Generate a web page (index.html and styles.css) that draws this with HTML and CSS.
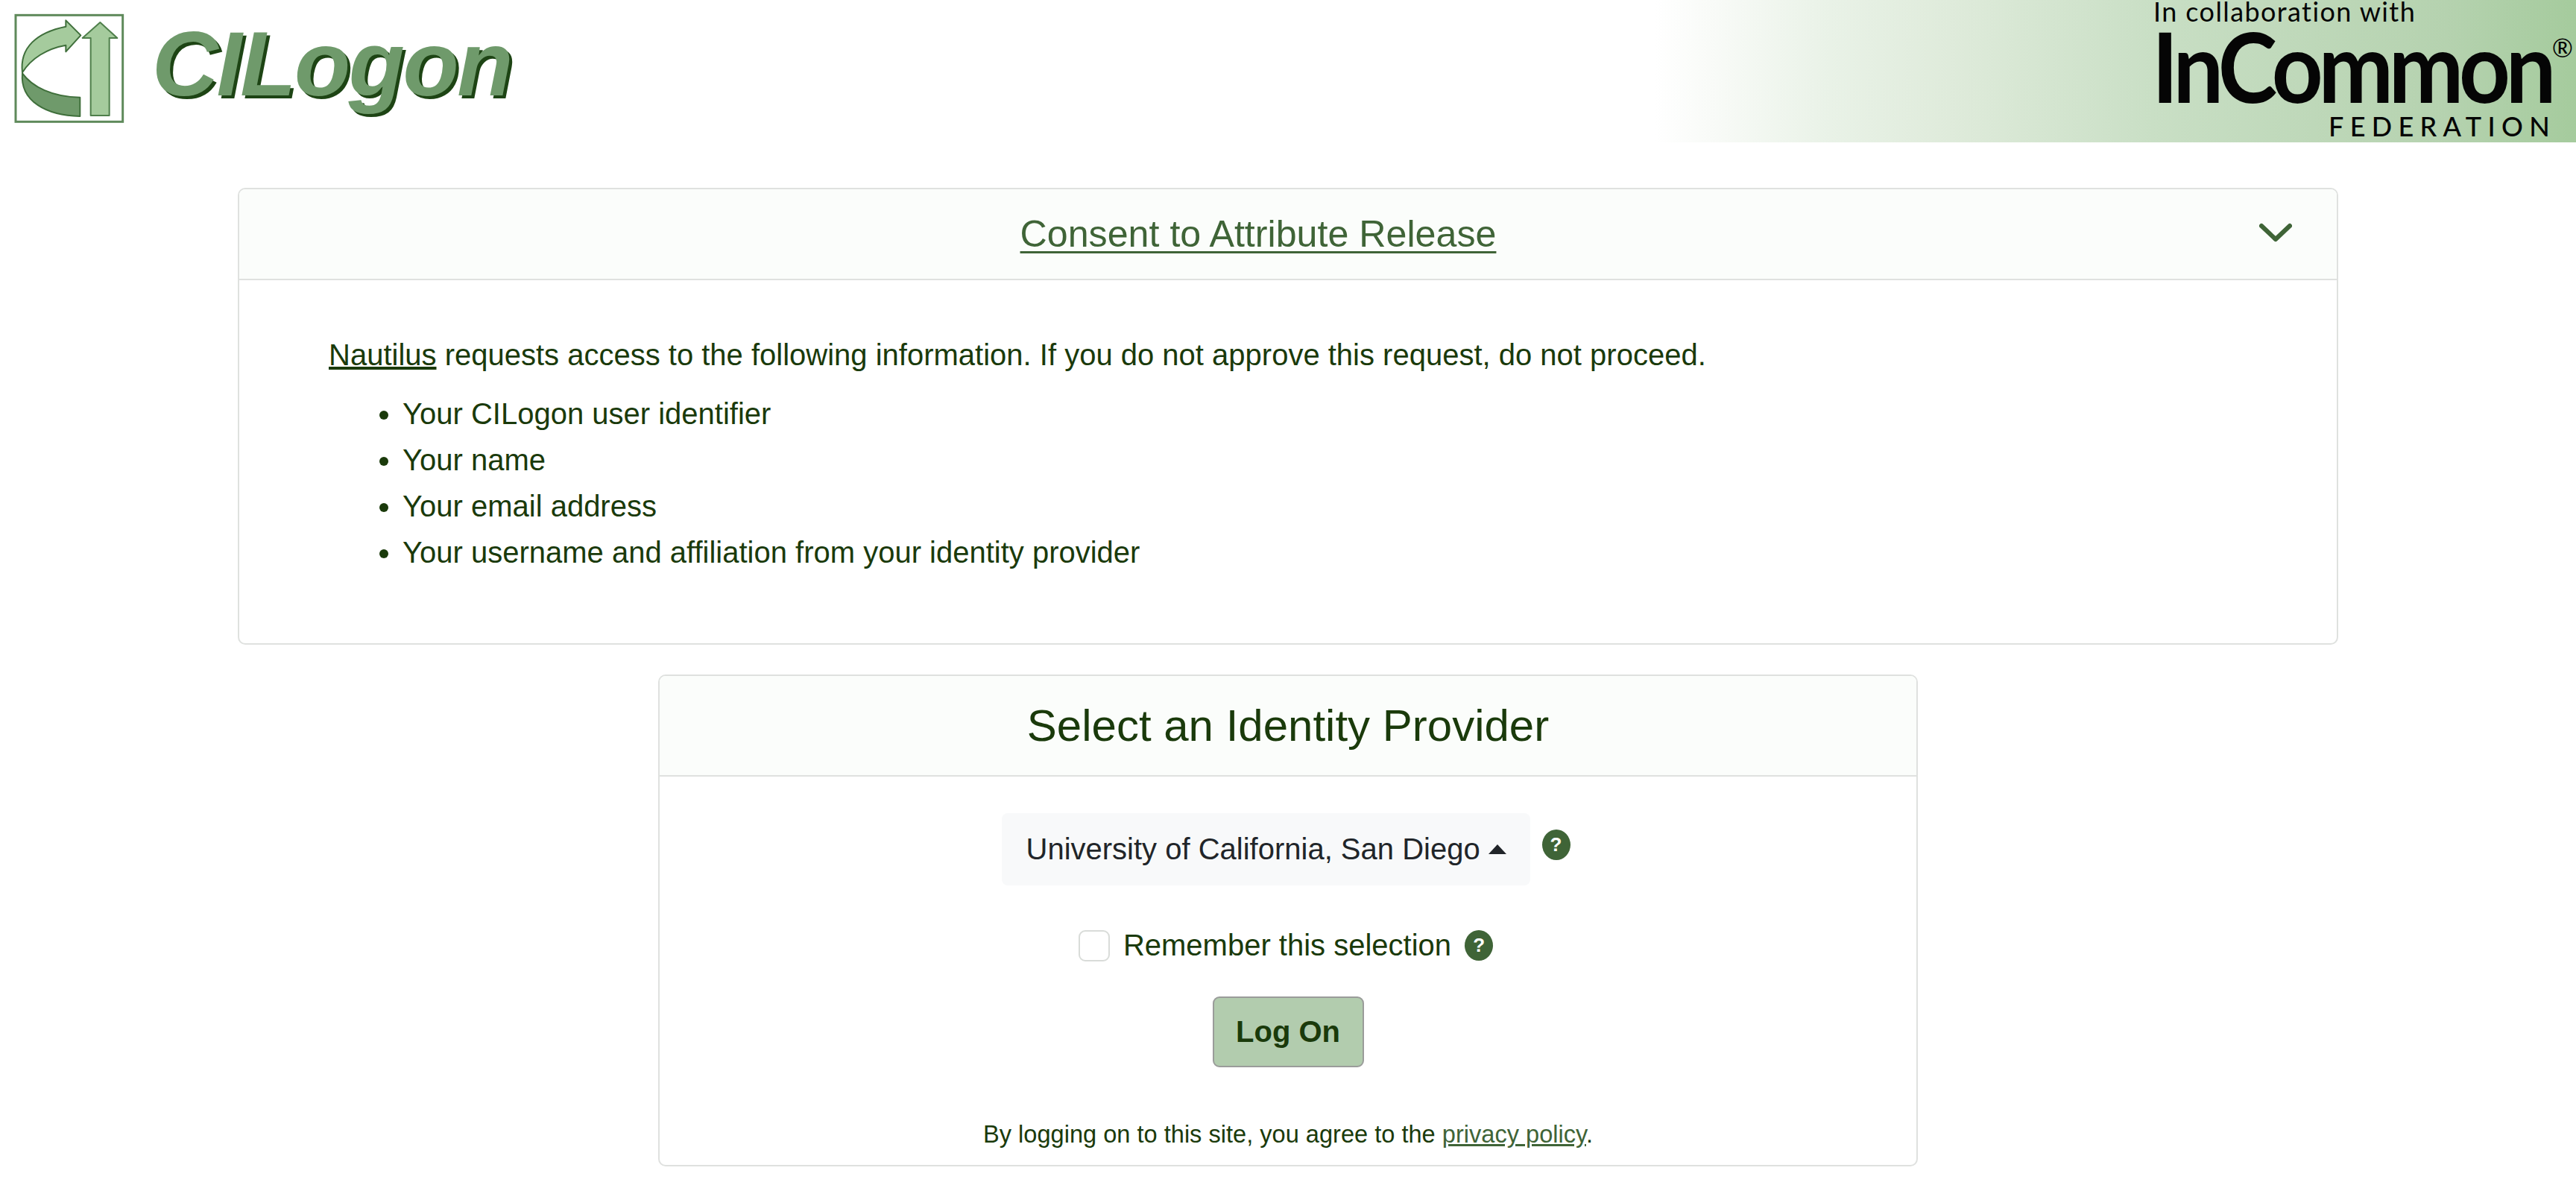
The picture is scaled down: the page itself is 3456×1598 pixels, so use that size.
FILE: index.html
```html
<!DOCTYPE html>
<html lang="en">
<head>
<meta charset="utf-8">
<title>CILogon</title>
<link rel="stylesheet" href="styles.css">
</head>
<body>
<header class="top">
  <div class="brand">
    <svg class="mark" viewBox="0 0 570 570" aria-hidden="true">
      <rect x="63" y="61" width="431" height="429" fill="#fff" stroke="#5f8a5b" stroke-width="9"/>
      <path d="M90 292C78 190 150 130 265 107V82L325 142L265 208V182C190 195 125 235 90 292Z" fill="#a5cb9d" stroke="#3f6f3b" stroke-width="6" stroke-linejoin="round"/>
      <path d="M90 295C130 350 210 390 322 392V468C190 465 80 410 90 295Z" fill="#6f9a6b" stroke="#3f6f3b" stroke-width="6" stroke-linejoin="round"/>
      <path d="M403 90L472 153H440V465H365V153H332Z" fill="#a5cb9d" stroke="#4f7f4b" stroke-width="6" stroke-linejoin="round"/>
    </svg>
    <span class="wordmark">CILogon</span>
  </div>
  <div class="banner">
    <div class="incommon">
      <div class="collab">In collaboration with</div>
      <div class="ic-name">InCommon</div>
      <span class="reg">®</span>
      <div class="federation">FEDERATION</div>
    </div>
  </div>
</header>

<main class="page">
  <section class="card card-wide">
    <div class="card-head head-consent">
      <a class="consent-title" href="#">Consent to Attribute Release</a>
      <svg class="chevron" viewBox="0 0 44 26" aria-hidden="true"><path d="M3 4L22 22L41 4" fill="none" stroke="#3f6437" stroke-width="6" stroke-linecap="round" stroke-linejoin="round"/></svg>
    </div>
    <div class="consent-body">
      <p class="lead"><a class="plain-link" href="#">Nautilus</a> requests access to the following information. If you do not approve this request, do not proceed.</p>
      <ul class="scopes">
        <li>Your CILogon user identifier</li>
        <li>Your name</li>
        <li>Your email address</li>
        <li>Your username and affiliation from your identity provider</li>
      </ul>
    </div>
  </section>

  <section class="card card-narrow">
    <div class="card-head head-idp">
      <h1 class="idp-title">Select an Identity Provider</h1>
    </div>
    <div class="idp-body">
      <div class="idp-row">
        <div class="select">University of California, San Diego<span class="caret"></span></div>
        <span class="help help-select">?</span>
      </div>
      <div class="remember">
        <span class="check"></span>
        <span class="remember-label">Remember this selection</span>
        <span class="help">?</span>
      </div>
      <button class="logon" type="button">Log On</button>
      <p class="terms">By logging on to this site, you agree to the <a class="policy" href="#">privacy policy</a>.</p>
    </div>
  </section>
</main>
</body>
</html>
```
FILE: styles.css
```css
* { box-sizing: border-box; }
html, body { margin: 0; background: #fff; }
body {
  font-family: "Liberation Sans", Arial, sans-serif;
  color: #1a3a0b;
  overflow: hidden;
}
.top {
  display: flex;
  justify-content: space-between;
  height: 191px;
}
.brand {
  display: flex;
  align-items: flex-start;
}
.mark {
  width: 190px;
  height: 190px;
  flex: none;
  filter: blur(.5px);
}
.wordmark {
  margin: 18px 0 0 14px;
  font-size: 123px;
  line-height: 136px;
  font-weight: 700;
  font-style: italic;
  letter-spacing: -2.4px;
  color: #6f9a6b;
  text-shadow: 4px 4px 0 #1d4414;
  filter: blur(.7px);
}
.banner {
  width: 1236px;
  height: 191px;
  display: flex;
  justify-content: flex-end;
  background: linear-gradient(90deg, #fff 0%, #f9fbf8 6%, #e9f2e7 19%, #dfebdb 32%, #c9dfc5 54%, #b5d2af 86%, #a5cb9d 100%);
  color: #050505;
}
.incommon {
  width: 569px;
  font-family: Lato, "Liberation Sans", sans-serif;
  position: relative;
}
.collab {
  font-size: 36px;
  line-height: 30px;
  letter-spacing: 1.4px;
  padding-left: 2px;
}
.ic-name {
  margin-top: 8px;
  font-size: 120px;
  line-height: 100px;
  font-weight: 700;
  letter-spacing: -6.2px;
  white-space: nowrap;
  transform: scaleY(1.08);
}
.reg {
  position: absolute;
  right: 4px;
  top: 44px;
  font-size: 34px;
  line-height: 40px;
  font-weight: 400;
}
.federation {
  margin-top: 13px;
  padding-right: 27px;
  text-align: right;
  font-size: 36px;
  line-height: 36px;
  font-weight: 500;
  letter-spacing: 8.3px;
}
.page {
  display: flex;
  flex-direction: column;
  align-items: center;
  gap: 40px;
  padding-top: 61px;
}
.card {
  border: 2px solid #dfe1df;
  border-radius: 10px;
  background: #fff;
}
.card-wide { width: 2818px; height: 613px; }
.card-narrow { width: 1690px; height: 660px; }
.card-head {
  background: #fbfdfb;
  border-bottom: 2px solid #dfe1df;
  border-radius: 8px 8px 0 0;
  display: flex;
  align-items: center;
  justify-content: center;
  position: relative;
}
.head-consent { height: 122px; padding-right: 80px; }
.head-idp { height: 135px; }
.consent-title {
  font-size: 50.2px;
  color: #3f6437;
  text-decoration: underline;
  text-decoration-thickness: 3px;
  text-underline-offset: 6px;
}
.chevron {
  position: absolute;
  right: 60px;
  top: 45px;
  width: 44px;
  height: 26px;
}
.consent-body {
  padding: 69px 120px 0;
  font-size: 40px;
  line-height: 62px;
}
.lead { margin: 0 0 17px; }
.plain-link { color: inherit; text-decoration: underline; }
.scopes {
  margin: 0;
  padding: 0 0 0 99px;
}
.idp-title {
  margin: 0;
  font-size: 60px;
  font-weight: 400;
  line-height: 72px;
}
.idp-body {
  display: flex;
  flex-direction: column;
  align-items: center;
  padding-top: 49px;
}
.idp-row {
  display: flex;
  align-items: flex-start;
  gap: 16px;
  margin-left: -6px;
}
.select {
  width: 709px;
  height: 97px;
  padding-left: 33px;
  display: flex;
  align-items: center;
  background: #f8f9fa;
  border-radius: 8px;
  font-size: 40px;
  color: #212529;
  white-space: nowrap;
}
.caret {
  margin-left: 11px;
  border-left: 12px solid transparent;
  border-right: 12px solid transparent;
  border-bottom: 13px solid #212529;
}
.help {
  flex: none;
  width: 38px;
  height: 41px;
  border-radius: 50%;
  background: #3f6437;
  color: #fff;
  font-size: 26px;
  font-weight: 700;
  line-height: 41px;
  text-align: center;
}
.help-select { margin-top: 22px; }
.remember {
  display: flex;
  align-items: center;
  margin: 60px 6px 0 0;
  height: 41px;
}
.check {
  width: 42px;
  height: 42px;
  border: 2px solid #d9dcd9;
  border-radius: 9px;
  background: #fff;
}
.remember-label {
  margin: 0 18px 0 18px;
  font-size: 40px;
}
.logon {
  margin-top: 48px;
  width: 203px;
  height: 95px;
  padding: 0;
  background: #b2ccae;
  border: 2px solid #9a9c9a;
  border-radius: 9px;
  color: #1a3a0b;
  font-family: inherit;
  font-size: 40px;
  font-weight: 700;
}
.terms {
  margin: 70px 0 0;
  font-size: 32.6px;
  line-height: 40px;
}
.policy { color: #3f6437; text-decoration: underline; }
```
